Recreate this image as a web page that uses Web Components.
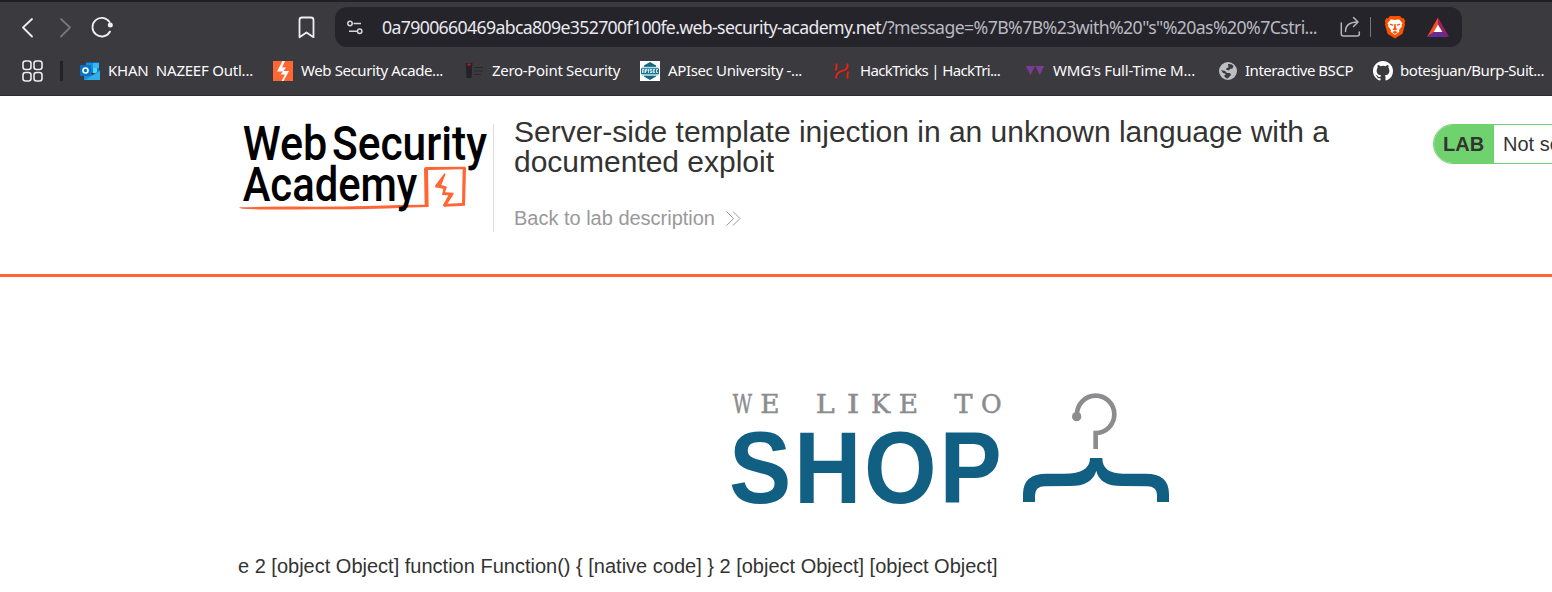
<!DOCTYPE html>
<html lang="en"><head><meta charset="utf-8"><title>Web Security Academy</title>
<style>html,body{margin:0;padding:0;background:#fff;overflow:hidden}body{width:1552px;height:592px;font-family:"Liberation Sans",Arial,sans-serif}</style></head>
<body>
<browser-chrome></browser-chrome>
<lab-header></lab-header>
<shop-page></shop-page>
<script>
const define=(name,html,after)=>{
  const t=document.createElement('template');t.innerHTML=html;
  customElements.define(name,class extends HTMLElement{
    connectedCallback(){ if(this.shadowRoot)return;
      this.attachShadow({mode:'open'}).append(t.content.cloneNode(true)); after&&after(this,this.shadowRoot);}
  });
};
/* A single line of text whose tracking is adjusted to fill a given width. */
define('fit-text','<style>:host{display:block;white-space:pre;width:var(--w)}span{display:inline-block;white-space:pre}</style><span><slot></slot></span>',(el,r)=>{
  const w=+el.getAttribute('w'),s=r.querySelector('span');el.style.setProperty('--w',w+'px');
  const n=el.textContent.length,m=s.getBoundingClientRect().width;
  s.style.letterSpacing=((w-m)/n)+'px';
});
define('book-mark',`<style>:host{display:flex;align-items:center;gap:8px;height:24px;flex:none;color:#fbfbfc;font:15px/22px "Noto Sans","Open Sans",sans-serif}
::slotted(svg){width:20px;height:20px;display:block;flex:none}::slotted(fit-text){margin-bottom:2px}</style><slot name="icon"></slot><slot></slot>`);
define('address-bar',`<style>:host{display:flex;align-items:center;box-sizing:border-box;width:1127px;height:40px;border-radius:12px;background:#25242a;padding-left:11px;font:17.7px/24px "Noto Sans","Open Sans",sans-serif;color:#e9e9ee}
svg{display:block;flex:none}fit-text{margin-bottom:1px}.rest{color:#b9b9c1}.set{margin-right:18px}.share{margin-left:22.5px}i{width:1px;height:20px;background:#77767d;margin:0 13px 0 9.5px}.bat{margin-left:20px}</style>
<svg class="set" width="18" height="18" viewBox="0 0 18 18" fill="none" stroke="#d6d6da" stroke-width="1.5"><circle cx="4" cy="5.500" r="2.200"/><path d="M7.500 5.500H15M3 13.300h8"/><circle cx="13.700" cy="13.300" r="2.200"/></svg>
<fit-text w="499">0a7900660469abca809e352700f100fe.web-security-academy.net</fit-text><fit-text class="rest" w="436">/?message=%7B%7B%23with%20"s"%20as%20%7Cstri...</fit-text>
<svg class="share" width="21" height="22" viewBox="0 0 21 22" fill="none" stroke="#b6b5bd" stroke-width="1.5" stroke-linecap="round" stroke-linejoin="round"><path d="M1.300 7v11q0 2 2 2h14q2 0 2-2v-2M5.500 15.500c0-6 4-9.500 12.500-9.500M13.500 1.500L18 6l-4.500 4.500"/></svg><i></i>
<svg width="22" height="24" viewBox="0 0 22 24"><path fill="#ff5000" d="M6 1h10l2 2.200 1.500-.2L21.300 6l-.8 2 .5 1.500-2.500 9.200L11 23.500 3.500 18.700 1 9.500 1.500 8 .7 6 2.500 3l1.500.2z"/><path fill="#fff" d="M7 4.200l4 .8 4-.8 3.500 4-1 1.500.5 1.500-3 3.700.3 1.800-4.300 3.300-4.300-3.300.3-1.800L4 11.200l.5-1.500-1-1.500z"/><path fill="#ff5000" d="M5.500 8.500l3.800 1.100-.5 1.100-2.600-.6zM16.500 8.500l-3.800 1.100.5 1.100 2.600-.6zM10.300 9h1.400l.3 4 1.500 1.200L11 15.500l-2.500-1.300L10 13zM8.300 17L11 15.900l2.700 1.100L11 19z"/></svg>
<svg class="bat" width="24" height="21" viewBox="0 0 24 21"><path fill="#ff4b1f" d="M12 .5L1 20l7-5 4-7.500z"/><path fill="#9e1f63" d="M12 .5L23 20l-7-5-4-7.500z"/><path fill="#662d91" d="M1 20h22l-7-5.200H8z"/><path fill="#fff" d="M12 7.500l4.400 7.500H7.600z"/></svg>`);
define('browser-chrome',`<style>:host{display:block;box-sizing:border-box;height:96px;background:#3b3a3f;border-top:2px solid #201f26;border-bottom:1px solid #2c2b31}
nav{display:flex;align-items:center;height:50px;box-sizing:border-box}
nav svg{display:block;flex:none}.marks{display:flex;align-items:center;height:36px;margin-top:1px}
.marks>svg{margin-left:22px}.bar{width:3px;height:20px;background:#222128;margin:0 17px}book-mark{margin-right:var(--g,20px)}</style>
<nav><svg width="335" height="50" viewBox="0 2 335 50" fill="none" stroke="#efeff1" stroke-width="1.800" stroke-linecap="round" stroke-linejoin="round"><path d="M32 19l-9 8.500 9 9"/><path stroke="#77767c" d="M61 19l9 8.500-9 9"/><path d="M109.500 22a9.300 9.300 0 1 0 .5 9.500"/><circle cx="110.300" cy="25" r="2.500" fill="#efeff1" stroke="none"/><path d="M299.500 20q0-2.500 2.500-2.500h9q2.500 0 2.500 2.500v17.200l-7-4.700-7 4.700z"/></svg><address-bar></address-bar></nav>
<div class="marks"><svg width="21" height="22" viewBox="0 0 21 22" fill="none" stroke="#ececee" stroke-width="1.600"><rect x="1" y="1" width="8" height="8.500" rx="2.500"/><rect x="12" y="1" width="8" height="8.500" rx="2.500"/><rect x="1" y="12.500" width="8" height="8.500" rx="2.500"/><rect x="12" y="12.500" width="8" height="8.500" rx="2.500"/></svg><span class="bar"></span>
<book-mark><svg slot="icon" viewBox="0 0 20 20"><path fill="#0a62b8" d="M6 1h13v11H6z"/><path fill="#1493e0" d="M6 2h7v5H6z"/><path fill="#35b8f1" d="M13 2h6v5h-6z"/><path fill="#0d80d4" d="M6 7h13v5H6z"/><path fill="#50d9ff" d="M13 7h4v5h-4z"/><path fill="#1490df" d="M4 19V9l8.500 5L20 9v10z"/><path fill="#31aeea" d="M5 19l15-9v9z"/><rect y="4" width="11" height="11" rx="1" fill="#0872c4"/><circle cx="5.500" cy="9.500" r="2.500" fill="none" stroke="#fff" stroke-width="1.600"/></svg><fit-text w="145">KHAN  NAZEEF Outl...</fit-text></book-mark>
<book-mark style="--g:21px"><svg slot="icon" viewBox="0 0 20 20"><path fill="#ff6633" d="M0 0h20v20H0z"/><path fill="#fff" d="M9.500 0L4 10.500h6l-2.500 3H12L8.500 20h2L16 10h-5.500l2.500-3.500H9L12 0z"/></svg><fit-text w="142">Web Security Acade...</fit-text></book-mark>
<book-mark style="--g:20px"><svg slot="icon" viewBox="0 0 20 20"><path fill="#242226" d="M1.500 2h7l-.5 6-.5 9h-5L2 8z"/><path fill="#c81720" d="M3.500 2.500h3v2h-3z"/><path stroke="#2a282c" stroke-width="1.200" d="M10 6.500h9M10 10h9M10 13.500h7"/></svg><fit-text w="128">Zero-Point Security</fit-text></book-mark>
<book-mark style="--g:30px"><svg slot="icon" viewBox="0 0 20 20"><path fill="#fff" d="M0 0h20v20H0z"/><path fill="#136783" d="M10 1l6 3.500v2H4v-2zM4 14h12v1.500L10 19l-6-3.500z"/><path fill="#b8dce6" d="M2 5.800h16v9H2z"/><path fill="#1a7391" d="M1 7.300h18v5.900H1z"/><path stroke="#fff" stroke-width=".8" fill="none" d="M2.500 12V8.500H4V12M5.500 12V8.500H7V10H5.500M8.500 8v4M12 8.500h-2V10h2v1.500h-2M15 8.500h-1.700v3H15M13.300 10H15M18 8.500h-1.500v3H18"/></svg><fit-text w="134">APIsec University -...</fit-text></book-mark>
<book-mark style="--g:25px"><svg slot="icon" viewBox="0 0 20 20" fill="none" stroke="#f32013" stroke-width="1.800"><path d="M4.500 2.500v3q0 2.500-1 4M15.500 2.500v3q0 2-3 3.500l-5 2q-3.500 2-3.500 6.500M15.500 17.500v-3q0-2.500 1-4"/></svg><fit-text w="140">HackTricks | HackTri...</fit-text></book-mark>
<book-mark style="--g:22px"><svg slot="icon" viewBox="0 0 20 20"><path fill="#7d3c93" d="M.8 5h9.300L5.500 14zM10.300 5h8.900L14.800 14z"/></svg><fit-text w="142">WMG's Full-Time M...</fit-text></book-mark>
<book-mark style="--g:19px"><svg slot="icon" viewBox="0 0 20 20"><circle cx="11" cy="10" r="9" fill="#bebfc5"/><path fill="#3b3a3f" d="M11 3q4-.5 5.500 2l-1 2.500-2.500.5-1 1.500-3-1 .5-1.500 2-.5zM4 9l4 1 2 2h3l1 2-2 2-1 1.500q-2 0-4-2.500L9 13l-3-1z"/></svg><fit-text w="108">Interactive BSCP</fit-text></book-mark>
<book-mark style="--g:0px"><svg slot="icon" style="margin:0 -1px 0 1px" viewBox="0 0 16 16"><path fill="#fff" d="M8 0C3.580 0 0 3.580 0 8c0 3.540 2.290 6.530 5.470 7.590.4.070.55-.17.55-.38 0-.19-.01-.82-.01-1.490-2.010.37-2.530-.49-2.690-.94-.09-.23-.48-.94-.82-1.130-.28-.15-.68-.52-.01-.53.63-.01 1.080.58 1.230.82.72 1.210 1.870.87 2.330.66.070-.52.28-.87.51-1.070-1.780-.2-3.640-.89-3.640-3.950 0-.87.31-1.590.82-2.150-.08-.2-.36-1.020.08-2.120 0 0 .67-.21 2.200.82a7.700 7.700 0 0 1 4 0c1.530-1.040 2.200-.82 2.200-.82.44 1.100.16 1.920.08 2.120.51.56.82 1.270.82 2.150 0 3.070-1.870 3.750-3.650 3.950.29.25.54.73.54 1.480 0 1.070-.01 1.930-.01 2.200 0 .21.15.46.55.38A8 8 0 0 0 16 8c0-4.420-3.580-8-8-8z"/></svg><fit-text w="144">botesjuan/Burp-Suit...</fit-text></book-mark></div>`);
define('academy-logo',`<style>:host{display:block}svg{display:block;overflow:visible}</style>
<svg width="280" height="130" viewBox="0 0 840 390" font-family="Roboto,sans-serif" font-weight="500" font-size="144"><g fill="#000"><text x="38" y="151" textLength="254" lengthAdjust="spacingAndGlyphs">Web</text><text x="306" y="151" textLength="465" lengthAdjust="spacingAndGlyphs">Security</text></g>
<path fill="#ff6633" d="M26 292q90-3 230-2 180-1 250-5l78-1-2-108q0-5 6-5l116-1q5 1 4 7l-3 110-64 3-1-8 56-3 2-101-104 2 2 111-82 2q-80 5-264 5-150 2-214-2z"/><path fill="#ff6633" d="M643 190q4 0 3 4l-12 31 17 5-6 17 26 1-1 6-24 37-7-5 16-30-19-1 4-19-25-4 1-6z"/>
<text x="38" y="272" textLength="524" lengthAdjust="spacingAndGlyphs">Academy</text></svg>`);
define('lab-status',`<style>:host{display:flex;box-sizing:border-box;width:240px;height:40px;border:1px solid #70d26f;border-radius:20px;overflow:hidden;font-size:20px;line-height:38px;color:#333332;white-space:nowrap}
b{background:#70d26f;width:60px;box-sizing:border-box;padding-left:9px}span{padding-left:9px}</style><b>LAB</b><span>Not solved</span>`);
define('lab-header',`<style>:host{display:flex;box-sizing:border-box;height:181px;border-bottom:3px solid #f63;padding:14px 0 0 230px;color:#333332;overflow:hidden}
.logo{width:263px;flex:none}.info{box-sizing:border-box;border-left:1px solid #ddd;height:108px;margin-top:14px;padding-left:20px;width:940px;flex:none}
h2{font-weight:400;font-size:30px;line-height:30px;margin:-7px 0 0}.back{display:flex;align-items:center;gap:11px;font-size:20px;line-height:24px;color:#999;margin-top:29px}lab-status{margin-top:14px;flex:none}svg{display:block}</style>
<div class="logo"><academy-logo></academy-logo></div><div class="info"><h2><fit-text w="815">Server-side template injection in an unknown language with a</fit-text><fit-text w="260">documented exploit</fit-text></h2>
<div class="back"><fit-text w="201">Back to lab description</fit-text><svg width="15" height="15" viewBox="0 0 15 15" fill="none" stroke="#999"><path d="M.5.5l7 7-7 7M7 .5l7 7-7 7"/></svg></div></div><lab-status></lab-status>`);
define('shop-logo',`<style>:host{display:block}svg{display:block;overflow:visible}</style>
<svg width="460" height="135" viewBox="0 0 1380 405"><g fill="#8c8c8e" stroke="#8c8c8e" stroke-width="1.500" font-family="DejaVu Serif,serif" font-size="76"><text x="38" y="98" textLength="58" lengthAdjust="spacingAndGlyphs">W</text><text x="121" y="98" textLength="58" lengthAdjust="spacingAndGlyphs">E</text><text x="287" y="98" textLength="57" lengthAdjust="spacingAndGlyphs">L</text><text x="380" y="98" textLength="38" lengthAdjust="spacingAndGlyphs">I</text><text x="453" y="98" textLength="58" lengthAdjust="spacingAndGlyphs">K</text><text x="536" y="98" textLength="58" lengthAdjust="spacingAndGlyphs">E</text><text x="703" y="98" textLength="55" lengthAdjust="spacingAndGlyphs">T</text><text x="783" y="98" textLength="62" lengthAdjust="spacingAndGlyphs">O</text></g>
<text transform="translate(27 368) scale(.915 1)" fill="#115f83" font-family="Liberation Sans,sans-serif" font-weight="700" font-size="306" x="0 213 443 690">SHOP</text>
<g fill="none" stroke="#8c8c8e" stroke-width="14"><path d="M1071 108V103A56 56 0 1 1 1127 159V207"/></g><circle cx="1070" cy="110" r="14" fill="#8c8c8e"/>
<path fill="#115f83" d="M1110 234h37q0 46 60 47h70q70 0 70 61v24h-36v-21q0-26-30-26l-75-1q-68 0-77-46-13 46-79 46l-75 1q-30 0-30 27v20h-36v-24q0-61 71-61h53q77 0 77-47z"/></svg>`);
define('shop-page',`<style>:host{display:flex;flex-direction:column;height:315px;padding-top:103px;box-sizing:border-box;color:#333332}
shop-logo{margin-left:720px}p{margin:39px 0 0 238px;font-size:20px;line-height:24px}</style><shop-logo></shop-logo><p><fit-text w="759.5">e 2 [object Object] function Function() { [native code] } 2 [object Object] [object Object]</fit-text></p>`);
</script></body></html>
